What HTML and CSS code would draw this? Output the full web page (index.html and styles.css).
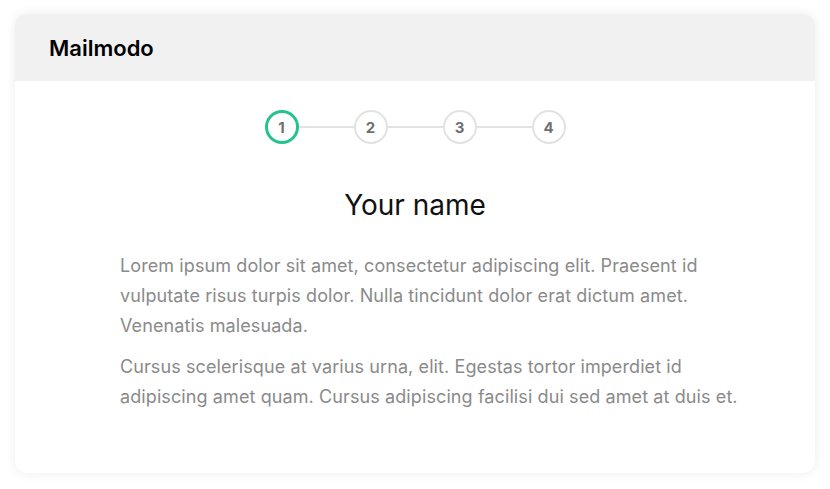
FILE: index.html
```html
<!DOCTYPE html>
<html>
<head>
<meta charset="utf-8">
<link rel="stylesheet" href="styles.css">
</head>
<body>
<div class="card">
  <div class="card-header">Mailmodo</div>
  <div class="card-body">
    <div class="stepper">
      <div class="step active">1</div>
      <div class="line"></div>
      <div class="step">2</div>
      <div class="line"></div>
      <div class="step">3</div>
      <div class="line"></div>
      <div class="step">4</div>
    </div>
    <h1 class="title">Your name</h1>
    <div class="content">
      <p>Lorem ipsum dolor sit amet, consectetur adipiscing elit. Praesent id vulputate risus turpis dolor. Nulla tincidunt dolor erat dictum amet. Venenatis malesuada.</p>
      <p>Cursus scelerisque at varius urna, elit. Egestas tortor imperdiet id adipiscing amet quam. Cursus adipiscing facilisi dui sed amet at duis et.</p>
    </div>
  </div>
</div>
</body>
</html>
```

FILE: styles.css
```css
html, body {
  margin: 0;
  padding: 0;
  background: #ffffff;
}
body {
  padding: 14px 15px;
  font-family: Inter, "Noto Sans", sans-serif;
}
.card {
  width: 800px;
  height: 459px;
  border-radius: 12px;
  background: #ffffff;
  box-shadow: 0 0 12px rgba(0, 0, 0, 0.08);
  overflow: hidden;
  display: flex;
  flex-direction: column;
}
.card-header {
  height: 67px;
  background: #f1f1f1;
  display: flex;
  align-items: center;
  padding-left: 34px;
  font-size: 22px;
  font-weight: 600;
  color: #000;
}
.card-body {
  padding-top: 29px;
  display: flex;
  flex-direction: column;
  align-items: center;
}
.stepper {
  display: flex;
  align-items: center;
}
.step {
  width: 34px;
  height: 34px;
  box-sizing: border-box;
  border: 2px solid #e2e2e2;
  border-radius: 50%;
  display: flex;
  align-items: center;
  justify-content: center;
  font-size: 15px;
  font-weight: 700;
  color: #707070;
}
.step.active {
  border: 3px solid #22c38e;
}
.line {
  width: 55px;
  height: 2px;
  background: #e2e2e2;
}
.title {
  margin: 44px 0 0;
  font-size: 28px;
  font-weight: 400;
  color: #111;
  line-height: 34px;
}
.content {
  align-self: flex-start;
  margin-left: 105px;
  margin-top: 29px;
  width: 640px;
}
.content p {
  margin: 0 0 11px;
  font-size: 18px;
  line-height: 30px;
  letter-spacing: 0.1px;
  color: #8a8a8a;
}
```
